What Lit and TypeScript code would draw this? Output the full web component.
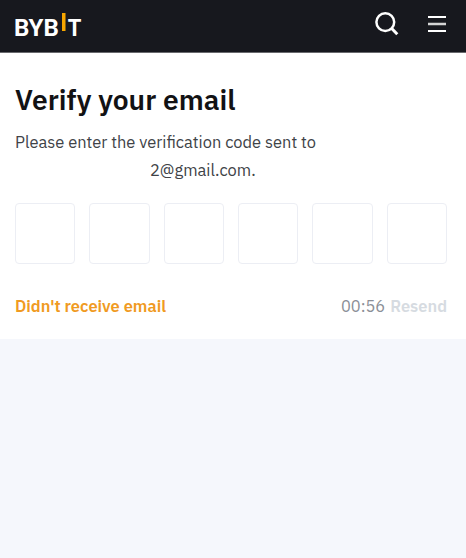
import { LitElement, html, css } from "lit";
import { customElement, state } from "lit/decorators.js";

@customElement("site-header")
class SiteHeader extends LitElement {
  static styles = css`
    :host { display: flex; align-items: center; height: 53px; padding: 0 20px 0 11px; background: #17181e; border-bottom: 1px solid #696a6e; box-sizing: border-box; }
    .logo { display: block; width: 76px; height: 40px; }
    .mark { font: 700 23.6px Roboto, sans-serif; fill: #fff; }
    .accent { fill: #f7a600; }
    .actions { margin: -4px 0 0 auto; display: flex; align-items: center; gap: 29px; }
    .icon { display: block; fill: none; stroke: #fff; }
  `;
  render() {
    return html`
      <svg class="logo" viewBox="11 6 76 40">
        <text class="mark" x="13.9" y="36" textLength="45" lengthAdjust="spacingAndGlyphs">BYB</text>
        <rect class="accent" x="62" y="13" width="3.5" height="18" />
        <text class="mark" x="67.8" y="36" textLength="13.6" lengthAdjust="spacingAndGlyphs">T</text>
      </svg>
      <div class="actions">
        <svg class="icon" width="24" height="26" viewBox="0 0 24 26">
          <circle cx="10.3" cy="11.1" r="8.9" stroke-width="2.5" />
          <path d="M16.5 17.3 L22.3 23.2" stroke-width="3" />
        </svg>
        <svg class="icon" width="18" height="18" viewBox="0 0 18 18">
          <path d="M0 2H18M0 16H18" stroke-width="2" />
          <path d="M0 9H18" stroke-width="2.5" stroke="#d4d4d5" />
        </svg>
      </div>`;
  }
}

@customElement("app-root")
class AppRoot extends LitElement {
  @state() private digits = ["", "", "", "", "", ""];
  static styles = css`
    :host { display: block; min-height: 558px; background: #f5f7fc; font-family: "IBM Plex Sans", "Noto Sans", sans-serif; color: #121214; }
    .panel { background: #fff; height: 286px; padding: 28px 19px 0 15px; box-sizing: border-box; }
    .title { margin: 0; font-size: 28.2px; line-height: 38px; font-weight: 600; white-space: nowrap; }
    .message { margin: 9px 0 0; font-size: 16.47px; line-height: 28px; color: #404347; white-space: nowrap; }
    .address { display: block; padding-left: 135px; }
    .code { display: grid; grid-template-columns: repeat(6, 1fr); column-gap: 14px; margin-top: 19px; }
    .digit { height: 61px; border: 1px solid #eceef4; border-radius: 4px; box-sizing: border-box; }
    .footer { display: flex; margin-top: 28px; font-size: 16.47px; line-height: 28px; white-space: nowrap; }
    .help { color: #f09a22; font-weight: 600; }
    .timer { margin-left: auto; color: #8b8f97; }
    .resend { margin-left: 5px; color: #d6dbe1; font-weight: 600; }
  `;
  render() {
    return html`
      <site-header></site-header>
      <main class="panel">
        <h1 class="title">Verify your email</h1>
        <p class="message">Please enter the verification code sent to <span class="address">2@gmail.com.</span></p>
        <div class="code">${this.digits.map((d) => html`<div class="digit">${d}</div>`)}</div>
        <div class="footer">
          <span class="help">Didn't receive email</span>
          <span class="timer">00:56</span>
          <span class="resend">Resend</span>
        </div>
      </main>`;
  }
}
